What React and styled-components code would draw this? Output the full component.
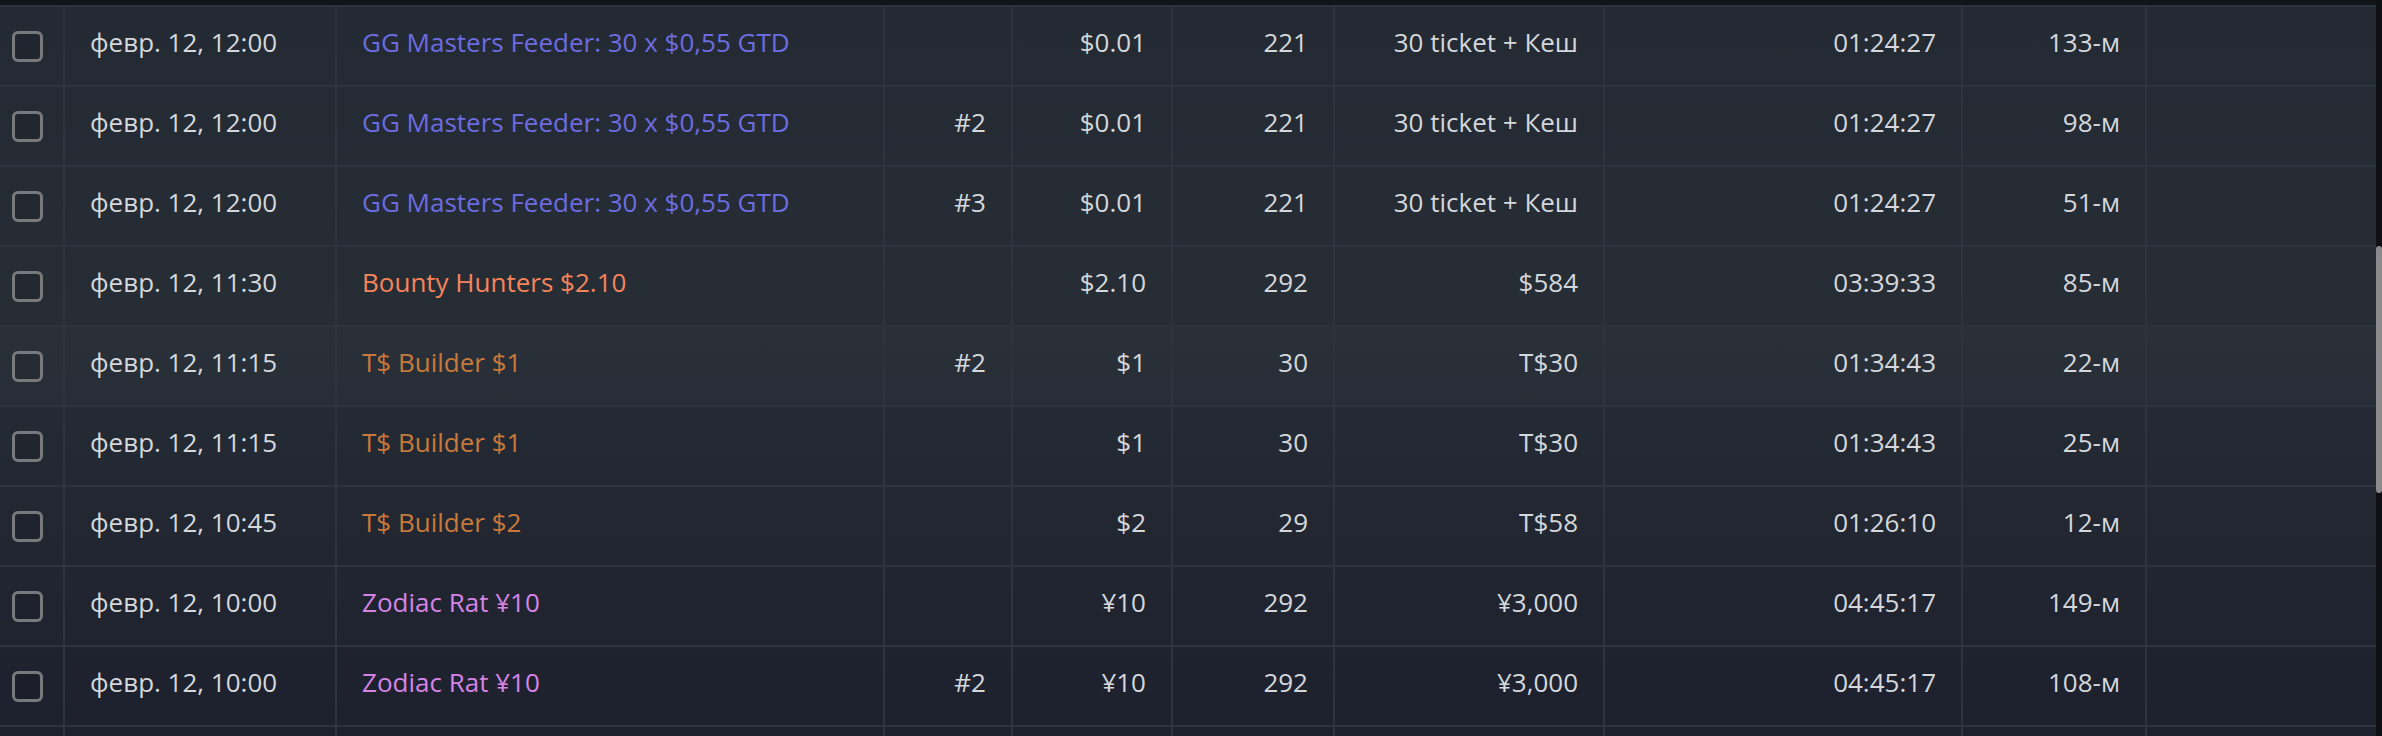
import React from 'react';
import styled, { createGlobalStyle } from 'styled-components';

const GlobalStyle = createGlobalStyle`
  html, body {
    margin: 0;
    padding: 0;
    background: #0f1216;
  }
  * {
    box-sizing: border-box;
  }
`;

const COLUMNS = '65px 272px 548px 128px 160px 162px 270px 358px 184px 1fr';

const NAME_COLORS = {
  gg: '#6c6ce0',
  bounty: '#f5845c',
  builder: '#c8793a',
  zodiac: '#d584e6',
};

const Page = styled.div`
  display: flex;
  height: 736px;
  overflow: hidden;
  font-family: 'Open Sans', 'Noto Sans', 'Liberation Sans', sans-serif;
`;

const Table = styled.div`
  flex: 1;
  display: flex;
  flex-direction: column;
  background: linear-gradient(180deg, #232a33 0%, #262d35 45%, #1d202d 100%);
`;

const TopBand = styled.div`
  height: 5px;
  background: #111419;
  flex-shrink: 0;
`;

const Row = styled.div`
  display: grid;
  grid-template-columns: ${COLUMNS};
  height: 80px;
  flex-shrink: 0;
  border-top: 2px solid #2c343e;
  background: ${props => props.highlighted ? 'rgba(255, 255, 255, 0.015)' : 'transparent'};
`;

const Cell = styled.div`
  display: flex;
  align-items: center;
  justify-content: ${props => props.right ? 'flex-end' : 'flex-start'};
  padding: 0 25px 8px;
  border-right: 2px solid #2c343e;
  color: #d4d7db;
  font-size: 26px;
  white-space: nowrap;
  overflow: hidden;

  &:last-child {
    border-right: none;
  }
`;

const CheckCell = styled(Cell)`
  padding: 0 0 0 12px;
`;

const Checkbox = styled.span`
  display: block;
  width: 31px;
  height: 31px;
  border: 3px solid #77797d;
  border-radius: 6px;
  background: rgba(0, 0, 0, 0.08);
`;

const NameLink = styled.span`
  color: ${props => NAME_COLORS[props.kind]};
  cursor: pointer;
`;

const ScrollTrack = styled.div`
  width: 6px;
  flex-shrink: 0;
  display: flex;
  flex-direction: column;
  background: #0e1013;
  padding-top: 246px;
`;

const ScrollThumb = styled.div`
  width: 6px;
  height: 247px;
  border-radius: 3px;
  background: #8a8a8a;
`;

const ROWS = [
  { date: 'февр. 12, 12:00', name: 'GG Masters Feeder: 30 x $0,55 GTD', kind: 'gg', re: '', buyin: '$0.01', entries: '221', prize: '30 ticket + Кеш', time: '01:24:27', place: '133-м' },
  { date: 'февр. 12, 12:00', name: 'GG Masters Feeder: 30 x $0,55 GTD', kind: 'gg', re: '#2', buyin: '$0.01', entries: '221', prize: '30 ticket + Кеш', time: '01:24:27', place: '98-м' },
  { date: 'февр. 12, 12:00', name: 'GG Masters Feeder: 30 x $0,55 GTD', kind: 'gg', re: '#3', buyin: '$0.01', entries: '221', prize: '30 ticket + Кеш', time: '01:24:27', place: '51-м' },
  { date: 'февр. 12, 11:30', name: 'Bounty Hunters $2.10', kind: 'bounty', re: '', buyin: '$2.10', entries: '292', prize: '$584', time: '03:39:33', place: '85-м' },
  { date: 'февр. 12, 11:15', name: 'T$ Builder $1', kind: 'builder', re: '#2', buyin: '$1', entries: '30', prize: 'T$30', time: '01:34:43', place: '22-м', highlighted: true },
  { date: 'февр. 12, 11:15', name: 'T$ Builder $1', kind: 'builder', re: '', buyin: '$1', entries: '30', prize: 'T$30', time: '01:34:43', place: '25-м' },
  { date: 'февр. 12, 10:45', name: 'T$ Builder $2', kind: 'builder', re: '', buyin: '$2', entries: '29', prize: 'T$58', time: '01:26:10', place: '12-м' },
  { date: 'февр. 12, 10:00', name: 'Zodiac Rat ¥10', kind: 'zodiac', re: '', buyin: '¥10', entries: '292', prize: '¥3,000', time: '04:45:17', place: '149-м' },
  { date: 'февр. 12, 10:00', name: 'Zodiac Rat ¥10', kind: 'zodiac', re: '#2', buyin: '¥10', entries: '292', prize: '¥3,000', time: '04:45:17', place: '108-м' },
  { date: '', name: '', kind: 'gg', re: '', buyin: '', entries: '', prize: '', time: '', place: '', empty: true },
];

const App = () => {
  return (
    <>
      <GlobalStyle />
      <Page>
        <Table>
          <TopBand />
          {ROWS.map((row, i) => (
            <Row key={i} highlighted={row.highlighted}>
              <CheckCell>{!row.empty && <Checkbox />}</CheckCell>
              <Cell>{row.date}</Cell>
              <Cell><NameLink kind={row.kind}>{row.name}</NameLink></Cell>
              <Cell right>{row.re}</Cell>
              <Cell right>{row.buyin}</Cell>
              <Cell right>{row.entries}</Cell>
              <Cell right>{row.prize}</Cell>
              <Cell right>{row.time}</Cell>
              <Cell right>{row.place}</Cell>
              <Cell />
            </Row>
          ))}
        </Table>
        <ScrollTrack>
          <ScrollThumb />
        </ScrollTrack>
      </Page>
    </>
  );
};

export default App;
